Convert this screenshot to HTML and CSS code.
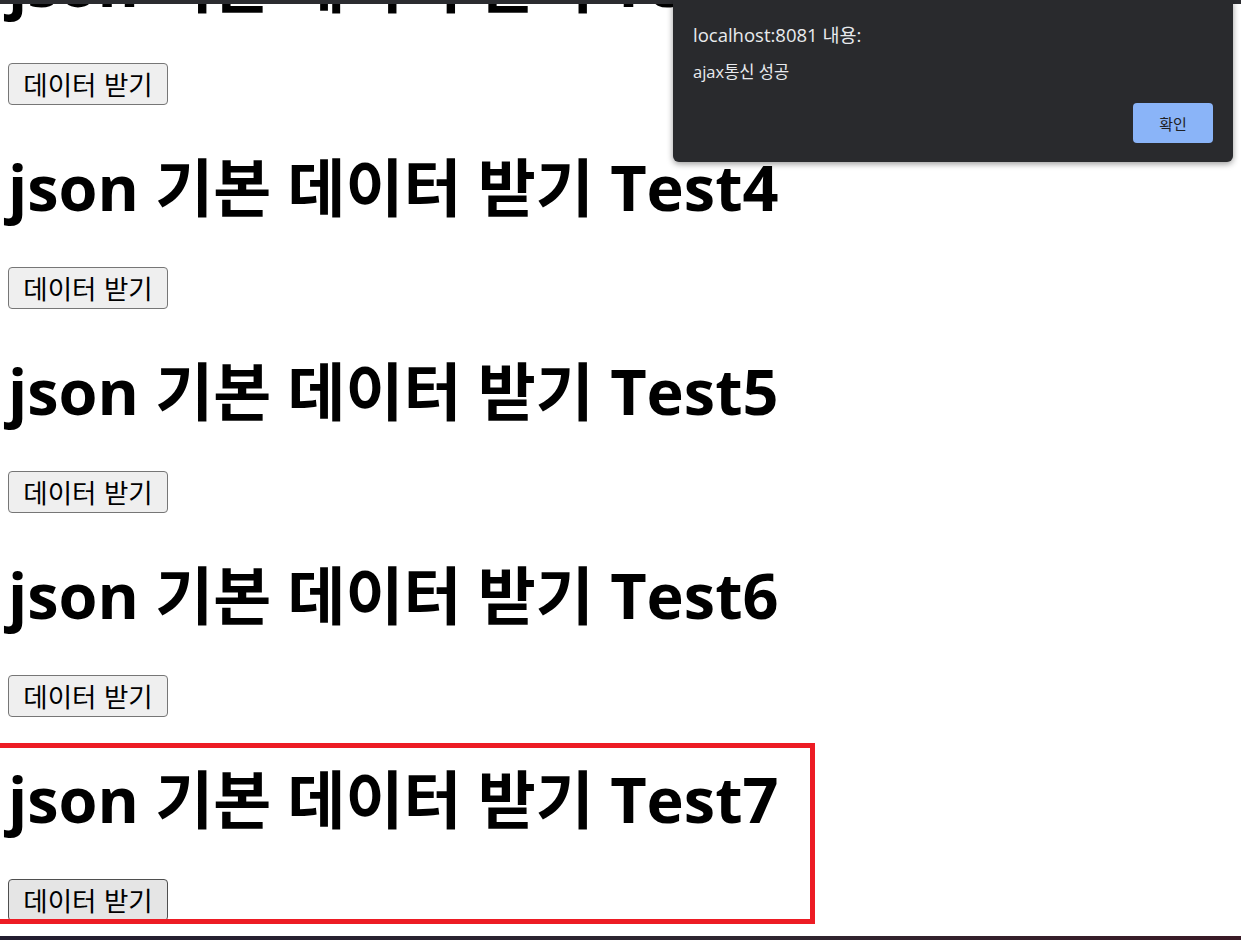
FILE: index.html
```html
<!DOCTYPE html>
<html lang="ko">
<head>
    <meta charset="UTF-8">
    <meta name="viewport" content="width=device-width, initial-scale=1.0">
    <title>json 기본 데이터 받기</title>
    <link rel="stylesheet" href="styles.css">
</head>
<body>
    <div class="page">
        <div class="test">
            <h1>json 기본 데이터 받기 Test3</h1>
            <button type="button">데이터 받기</button>
        </div>
        <div class="test">
            <h1>json 기본 데이터 받기 Test4</h1>
            <button type="button">데이터 받기</button>
        </div>
        <div class="test">
            <h1>json 기본 데이터 받기 Test5</h1>
            <button type="button">데이터 받기</button>
        </div>
        <div class="test">
            <h1>json 기본 데이터 받기 Test6</h1>
            <button type="button">데이터 받기</button>
        </div>
        <div class="test">
            <h1>json 기본 데이터 받기 Test7</h1>
            <button type="button" class="hover">데이터 받기</button>
        </div>
    </div>

    <div class="mark"></div>

    <div class="top-bar"></div>
    <div class="bottom-bar"></div>

    <div class="alert">
        <div class="alert-title">localhost:8081 내용:</div>
        <div class="alert-msg">ajax통신 성공</div>
        <div class="alert-actions">
            <button type="button" class="alert-ok">확인</button>
        </div>
    </div>
</body>
</html>
```

FILE: styles.css
```css
body {
    margin: 0;
    background-color: white;
    font-family: "Open Sans", "Noto Sans CJK KR", sans-serif;
    overflow: hidden;
    height: 940px;
}
.page {
    margin-top: -55px;
    padding-left: 8px;
}
.test h1 {
    margin: 0 0 42px 0;
    font-size: 63px;
    line-height: 76px;
    font-weight: bold;
    color: #000;
    white-space: nowrap;
}
.test button {
    display: block;
    width: 160px;
    height: 42px;
    margin-bottom: 44px;
    padding: 0 0 2px 0;
    font-family: "Noto Sans CJK KR", sans-serif;
    font-size: 26.5px;
    color: #000;
    background-color: #efefef;
    border: 1px solid #767676;
    border-radius: 4px;
}
.test button.hover {
    background-color: #e5e5e5;
    border-color: #4f4f4f;
}
.mark {
    position: absolute;
    left: -10px;
    top: 743px;
    width: 815px;
    height: 171px;
    border: 5px solid #ed1c24;
}
.top-bar {
    position: absolute;
    left: 0;
    top: 0;
    width: 100%;
    height: 4px;
    background-color: #2b2c30;
}
.bottom-bar {
    position: absolute;
    left: 0;
    top: 936px;
    width: 100%;
    height: 4px;
    background: linear-gradient(to right, #221d30, #2e2630 60%, #3a1a26);
}
.alert {
    position: absolute;
    left: 673px;
    top: 0;
    width: 560px;
    height: 162px;
    box-sizing: border-box;
    padding: 23px 20px 0 20px;
    background-color: #292a2d;
    border-radius: 0 0 6px 6px;
    box-shadow: 0 2px 6px rgba(0, 0, 0, 0.4);
    color: #e8eaed;
}
.alert-title {
    font-size: 18.5px;
    line-height: 24px;
}
.alert-msg {
    margin-top: 13px;
    font-size: 16.5px;
    line-height: 24px;
}
.alert-actions {
    display: flex;
    justify-content: flex-end;
    margin-top: 19px;
}
.alert-ok {
    width: 80px;
    height: 40px;
    font-family: "Noto Sans CJK KR", sans-serif;
    font-size: 15px;
    color: #202124;
    background-color: #8ab4f8;
    border: none;
    border-radius: 4px;
}
```
